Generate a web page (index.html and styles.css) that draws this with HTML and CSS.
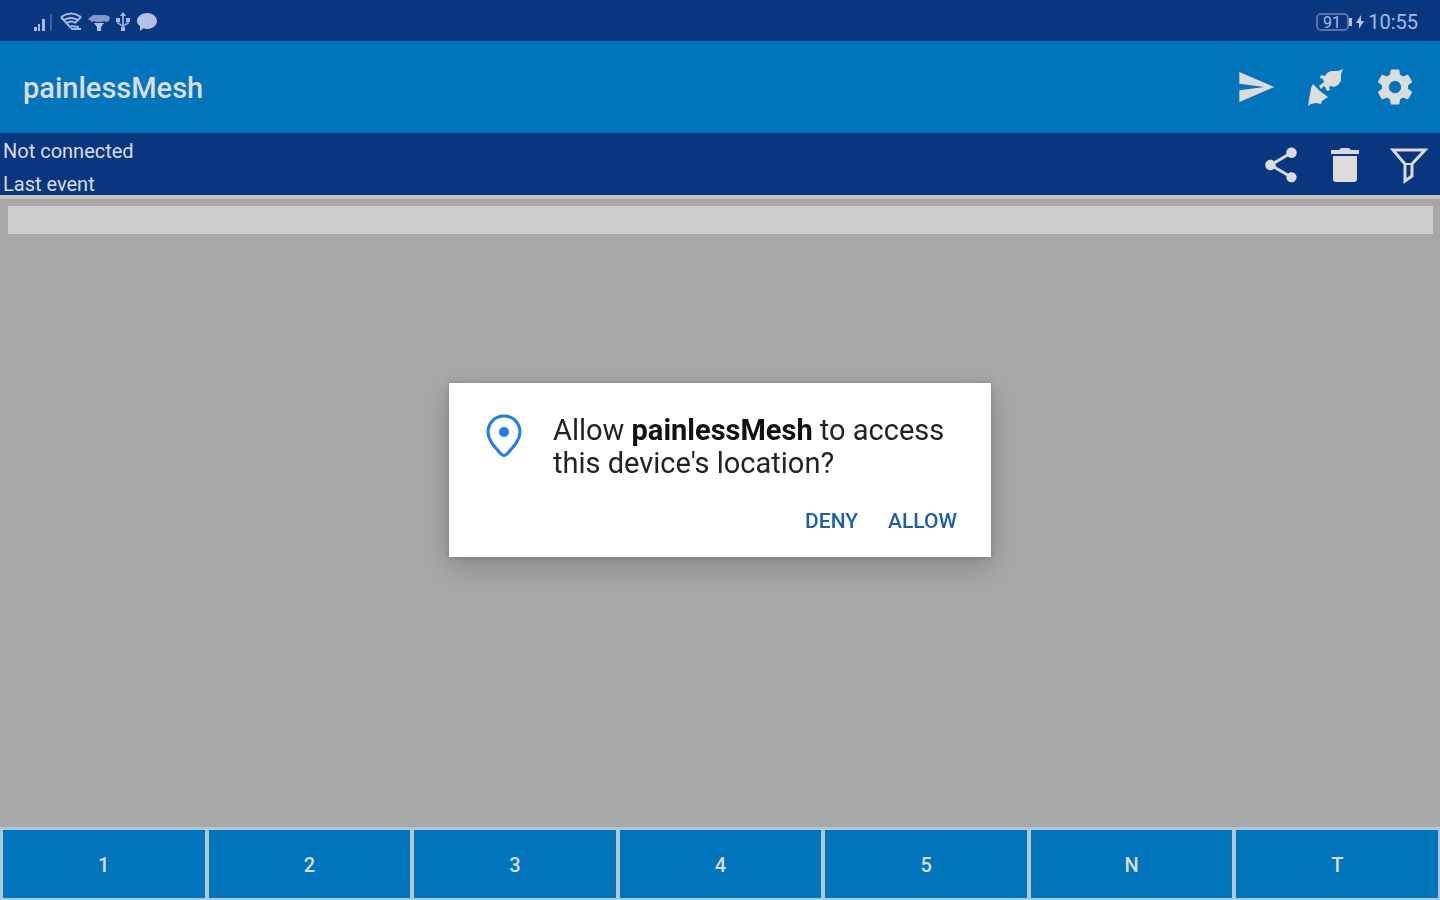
FILE: index.html
```
<!DOCTYPE html>
<html lang="en">
<head>
	<meta charset="UTF-8">
	<meta name="viewport" content="width=device-width, initial-scale=1">
	<title>painlessMesh</title>
	<link rel="stylesheet" href="styles.css">
</head>
<body>
<div class="status">
	<div class="status-left">
		<!-- signal -->
		<svg width="22" height="20" viewBox="0 0 22 20"><path d="M2 15h3v4H2zM6 12h2v7H6zM10 7h3v12h-3z" fill="#a9b9e0"/><path d="M18 2h2v17h-2z" fill="#3f5fa3"/></svg>
		<!-- wifi -->
		<svg width="24" height="20" viewBox="0 0 24 20"><g fill="none" stroke="#a9b9e0" stroke-width="2"><path d="M2 5q10-7 20 0M5 8q7-4 14 0M8 11q4-3 8 0M2 5l10 11M22 5l-6 6"/><path d="M12 14l8 1M12 17h10"/></g></svg>
		<!-- hotspot -->
		<svg width="22" height="20" viewBox="0 0 22 20"><path d="M0 7l5-4h13l4 2-1 4-3 1-2-1-2 1H8L6 9 4 10z" fill="#8197cb"/><path d="M6 11h10l-3 4v4H9v-4z" fill="#b4c2e6"/></svg>
		<!-- usb -->
		<svg width="16" height="20" viewBox="0 0 16 20"><path d="M8 3v14M3 7v4l5 3 5-3V7" fill="none" stroke="#8da2d2" stroke-width="2"/><path d="M8 0l3 4H5zM1 6h4v4H1zM11 6h4v4h-4zM6 15h4v4H6z" fill="#a9b9e0"/></svg>
		<!-- message -->
		<svg width="22" height="20" viewBox="0 0 22 20"><path d="M11 1c6 0 10 4 10 8s-4 8-10 8c-1 0-2 0-3-1l-4 3v-5C2 13 1 11 1 9c0-4 4-8 10-8z" fill="#b4c0e4"/></svg>
	</div>
	<div class="status-right">
		<svg width="36" height="18" viewBox="0 0 36 18"><rect x="1" y="1" width="31" height="16" rx="4" fill="none" stroke="#5870b0" stroke-width="2"/><path d="M33 5h3v8h-3z" fill="#b4c2e6"/><text class="battery" x="16" y="15">91</text></svg>
		<svg width="8" height="16" viewBox="0 0 8 16"><path d="M5 1L0 9h3v6l5-8H5z" fill="#b4c2e6"/></svg>
		<span>10:55</span>
	</div>
</div>

<header class="appbar">
	<h1>painlessMesh</h1>
	<div class="actions">
		<button type="button" aria-label="Send"><svg width="40" height="40" viewBox="0 0 24 24"><path d="M2 21l21-9L2 3v7l15 2-15 2z"/></svg></button>
		<button type="button" aria-label="Connect"><svg width="40" height="40" viewBox="5 4 40 40"><path d="M8 43l1-7 1-5 1-6 2-4 3 3 4 4 8 6-3 2-3 2-1 3-5-1-5 1z"/><path d="M43 6l-2 5v7l-3 4-4 2-3-1-2 1 1 3-3 1-2-4-1-1-3 3-2-3 5-4-1-3-3-1 1-3 4 1 2-3 4-2h7z"/></svg></button>
		<button type="button" aria-label="Settings"><svg width="42" height="42" viewBox="0 0 24 24"><path d="M19.43 12.98c.04-.32.07-.64.07-.98s-.03-.66-.07-.98l2.11-1.65c.19-.15.24-.42.12-.64l-2-3.46c-.12-.22-.39-.3-.61-.22l-2.49 1c-.52-.4-1.08-.73-1.69-.98l-.38-2.65C14.46 2.18 14.25 2 14 2h-4c-.25 0-.46.18-.49.42l-.38 2.65c-.61.25-1.17.59-1.69.98l-2.49-1c-.23-.09-.49 0-.61.22l-2 3.46c-.13.22-.07.49.12.64l2.11 1.65c-.04.32-.07.65-.07.98s.03.66.07.98l-2.11 1.65c-.19.15-.24.42-.12.64l2 3.46c.12.22.39.3.61.22l2.49-1c.52.4 1.08.73 1.69.98l.38 2.65c.03.24.24.42.49.42h4c.25 0 .46-.18.49-.42l.38-2.65c.61-.25 1.17-.59 1.69-.98l2.49 1c.23.09.49 0 .61-.22l2-3.46c.12-.22.07-.49-.12-.64l-2.11-1.65zM12 15.5c-1.93 0-3.5-1.57-3.5-3.5s1.57-3.5 3.5-3.5 3.5 1.57 3.5 3.5-1.57 3.5-3.5 3.5z"/></svg></button>
	</div>
</header>

<section class="info">
	<div class="info-text">
		<p>Not connected</p>
		<p>Last event</p>
	</div>
	<div class="actions">
		<button type="button" aria-label="Share"><svg width="42" height="42" viewBox="0 0 24 24"><path d="M18 16.08c-.76 0-1.44.3-1.96.77L8.91 12.7c.05-.23.09-.46.09-.7s-.04-.47-.09-.7l7.05-4.11c.54.5 1.25.81 2.04.81 1.66 0 3-1.34 3-3s-1.34-3-3-3-3 1.34-3 3c0 .24.04.47.09.7L8.04 9.81C7.5 9.31 6.79 9 6 9c-1.66 0-3 1.34-3 3s1.34 3 3 3c.79 0 1.5-.31 2.04-.81l7.12 4.16c-.05.21-.08.43-.08.65 0 1.61 1.31 2.92 2.92 2.92s2.92-1.31 2.92-2.92-1.31-2.92-2.92-2.92z"/></svg></button>
		<button type="button" aria-label="Delete"><svg width="42" height="42" viewBox="0 0 42 42"><path d="M7 6h8l2-2h8l2 2h8v4H7zM9 12h24v23q0 3-3 3H12q-3 0-3-3z"/></svg></button>
		<button type="button" aria-label="Filter"><svg width="42" height="42" viewBox="0 0 42 42"><path d="M5 6h32L24 20v12l-7 5V20z" fill="none" stroke="#dcdcdc" stroke-width="3"/><path d="M17 20h8" stroke="#dcdcdc" stroke-width="2"/></svg></button>
	</div>
</section>

<main class="log">
	<input class="log-line" type="text" aria-label="Log" readonly>
</main>

<nav class="keys">
	<button type="button">1</button>
	<button type="button">2</button>
	<button type="button">3</button>
	<button type="button">4</button>
	<button type="button">5</button>
	<button type="button">N</button>
	<button type="button">T</button>
</nav>

<!-- permission dialog -->
<div class="overlay">
	<div class="dialog" role="dialog" aria-labelledby="ask">
		<div class="dialog-body">
			<svg width="36" height="44" viewBox="0 0 36 44"><path d="M18 2C9 2 2 9 2 18c0 9 8 16 13 22q3 3 6 0c5-6 13-13 13-22C34 9 27 2 18 2z" fill="none" stroke="#1a7cf0" stroke-width="3"/><circle cx="18" cy="18" r="5" fill="#1a7cf0"/></svg>
			<p id="ask">Allow <b>painlessMesh</b> to access this device's location?</p>
		</div>
		<div class="dialog-btns">
			<button type="button">DENY</button>
			<button type="button">ALLOW</button>
		</div>
	</div>
</div>
</body>
</html>
```
FILE: styles.css
```
* {
	margin: 0;
	padding: 0;
	box-sizing: border-box;
}
body {
	display: flex;
	flex-direction: column;
	min-height: 100vh;
	background-color: #a8a8a8;
	font-family: Roboto, "Liberation Sans", sans-serif;
	color: #dcdcdc;
}
button {
	border: none;
	background: none;
	font-family: inherit;
	color: inherit;
	cursor: pointer;
}
svg {
	display: block;
}
.status {
	display: flex;
	justify-content: space-between;
	align-items: center;
	height: 41px;
	padding: 2px 22px 0 32px;
	background-color: #09377f;
}
.status-left {
	display: flex;
	gap: 5px;
}
.status-right {
	display: flex;
	align-items: center;
	gap: 4px;
	font-size: 20px;
	color: #a9b9e0;
}
.battery {
	font-size: 16px;
	text-anchor: middle;
	fill: #a9b9e0;
}
.appbar {
	display: flex;
	justify-content: space-between;
	align-items: center;
	height: 92px;
	padding: 0 24px 0 23px;
	background-color: #0075bc;
}
.appbar h1 {
	padding-top: 2px;
	font-size: 29px;
	font-weight: 500;
}
.actions {
	display: flex;
	align-items: center;
	fill: #dcdcdc;
}
.appbar .actions {
	gap: 29px;
}
.info {
	display: flex;
	justify-content: space-between;
	height: 66px;
	padding: 2px 10px 0 3px;
	background-color: #09377f;
	border-bottom: 4px solid #c4c4c4;
}
.info .actions {
	gap: 22px;
}
.info-text {
	font-size: 20px;
	line-height: 33px;
}
.log {
	flex: 1;
	padding: 7px 7px 0 8px;
}
.log-line {
	display: block;
	width: 100%;
	height: 28px;
	border: none;
	background-color: #cdcdcd;
}
.keys {
	display: flex;
	gap: 4px;
	height: 73px;
	padding: 3px 2px 2px 3px;
	background-color: #b4c8d4;
}
.keys button {
	flex: 1;
	padding-top: 2px;
	background-color: #0075bc;
	font-size: 20px;
	font-weight: 500;
}
.overlay {
	position: fixed;
	top: 40px;
	right: 0;
	bottom: 0;
	left: 0;
	display: flex;
	justify-content: center;
	align-items: center;
}
.dialog {
	width: 542px;
	max-width: 90%;
	padding: 31px 24px 18px 37px;
	background-color: #fff;
	box-shadow: 0 10px 26px rgba(0, 0, 0, 0.2), 0 0 6px rgba(0, 0, 0, 0.2);
}
.dialog-body {
	display: flex;
	gap: 31px;
}
.dialog-body svg {
	flex: none;
}
.dialog-body p {
	font-size: 29px;
	line-height: 33px;
	color: #222;
}
.dialog-body b {
	font-weight: 700;
	color: #111;
}
.dialog-btns {
	display: flex;
	justify-content: flex-end;
	gap: 10px;
	margin-top: 20px;
}
.dialog-btns button {
	height: 39px;
	padding: 2px 10px 0;
	font-size: 21px;
	font-weight: 500;
	color: #1a5fa8;
}
```
